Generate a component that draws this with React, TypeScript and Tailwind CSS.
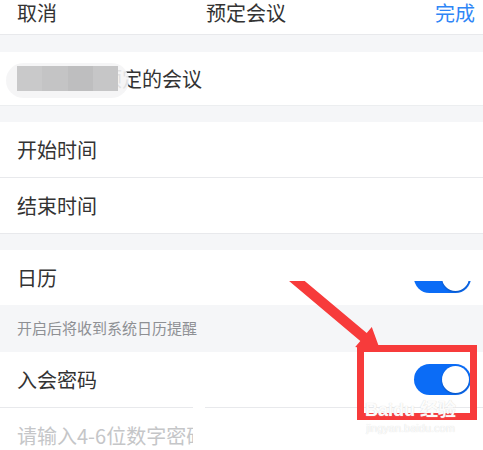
import React from "react";

const font = { fontFamily: '"Noto Sans CJK SC", "Noto Sans", sans-serif' };

function Toggle() {
  return (
    <div className="relative h-[31px] w-[57px] rounded-full bg-[#0b6cf6]">
      <div className="absolute right-[2px] top-[2px] h-[27px] w-[27px] rounded-full bg-white shadow-[0_1px_2px_rgba(0,0,0,0.25)]" />
    </div>
  );
}

function Gap({ h }: { h: string }) {
  return <div className={`${h} bg-[#f5f6f8]`} />;
}

export default function App() {
  return (
    <div
      className="relative h-[450px] w-[483px] overflow-hidden bg-[#f5f6f8] text-[#333]"
      style={font}
    >
      {/* Header */}
      <div className="flex h-[35px] items-start justify-between border-b border-[#e8e9ec] bg-white pl-[17px] pr-[8px] pt-[1px] text-[20px] leading-[24px]">
        <span className="text-[#333]">取消</span>
        <span className="text-[#333]">预定会议</span>
        <span className="text-[#2f86f6]">完成</span>
      </div>

      <Gap h="h-[17px]" />

      {/* Title */}
      <div className="flex h-[54px] items-center border-b border-[#eceef0] bg-white pl-[17px] text-[20px]">
        <div className="relative z-10 h-[25px] w-[101px]">
          <div className="absolute -inset-x-[11px] -inset-y-[3px] -bottom-[7px] rounded-full bg-[#f4f4f5]/90" />
          <div className="relative flex h-full w-full">
            <div className="flex-1 bg-[#c9c9ca]" />
            <div className="flex-1 bg-[#c4c4c5]" />
            <div className="flex-1 bg-[#bebebf]" />
            <div className="flex-1 bg-[#c6c6c7]" />
          </div>
        </div>
        <span className="-ml-[16px]">预定的会议</span>
      </div>

      <Gap h="h-[16px]" />

      <div className="flex h-[56px] items-center border-b border-[#e8e9ec] bg-white pl-[17px] text-[20px]">
        开始时间
      </div>
      <div className="flex h-[56px] items-center border-b border-[#e8e9ec] bg-white pl-[17px] text-[20px]">
        结束时间
      </div>

      <Gap h="h-[16px]" />

      {/* Calendar */}
      <div className="relative flex h-[55px] items-center justify-between bg-white pl-[17px] pr-[12px] text-[20px]">
        <span>日历</span>
        <Toggle />
        <div className="absolute right-0 top-0 h-[31px] w-[218px] bg-white" />
      </div>

      <div className="flex h-[47px] items-center pl-[17px] text-[15px] text-[#8e9094]">
        开启后将收到系统日历提醒
      </div>

      {/* Password */}
      <div className="flex h-[56px] items-center justify-between border-b border-[#e8e9ec] bg-white pl-[17px] pr-[12px] text-[20px]">
        <span>入会密码</span>
        <Toggle />
      </div>
      <div className="relative flex h-[56px] items-center bg-white pl-[17px] text-[20px] text-[#c5c6c8]">
        <span className="w-[176px] overflow-hidden whitespace-nowrap">请输入4-6位数字密码</span>
        <div className="absolute -top-[2px] left-[193px] h-[60px] w-[12px] bg-white" />
      </div>

      {/* Annotation: arrow */}
      <svg
        className="pointer-events-none absolute left-0 top-0"
        width="483"
        height="450"
        viewBox="0 0 483 450"
      >
        <defs>
          <clipPath id="below">
            <rect x="0" y="281" width="483" height="169" />
          </clipPath>
        </defs>
        <polygon
          clipPath="url(#below)"
          fill="#f73b3b"
          points="288.2,267.1 366.7,333.1 371.8,327 380.5,351 355.2,347 360.3,340.9 281.8,274.9"
        />
      </svg>

      {/* Annotation: box */}
      <div className="pointer-events-none absolute left-[357px] top-[345px] h-[75px] w-[120px] border-[7px] border-[#f73b3b]" />

      {/* Watermark */}
      <div
        className="pointer-events-none absolute left-[365px] top-[400px] flex flex-col items-center text-white/95"
        style={{ fontFamily: '"Liberation Sans", "Noto Sans CJK SC", sans-serif' }}
      >
        <div className="text-[18px] font-bold leading-[21px] [text-shadow:0_0_1px_#cfcfcf]">
          Baidu 经验
        </div>
        <div className="text-[11px] leading-[14px] [text-shadow:0_0_1px_#d0d0d0]">
          jingyan.baidu.com
        </div>
      </div>
    </div>
  );
}
